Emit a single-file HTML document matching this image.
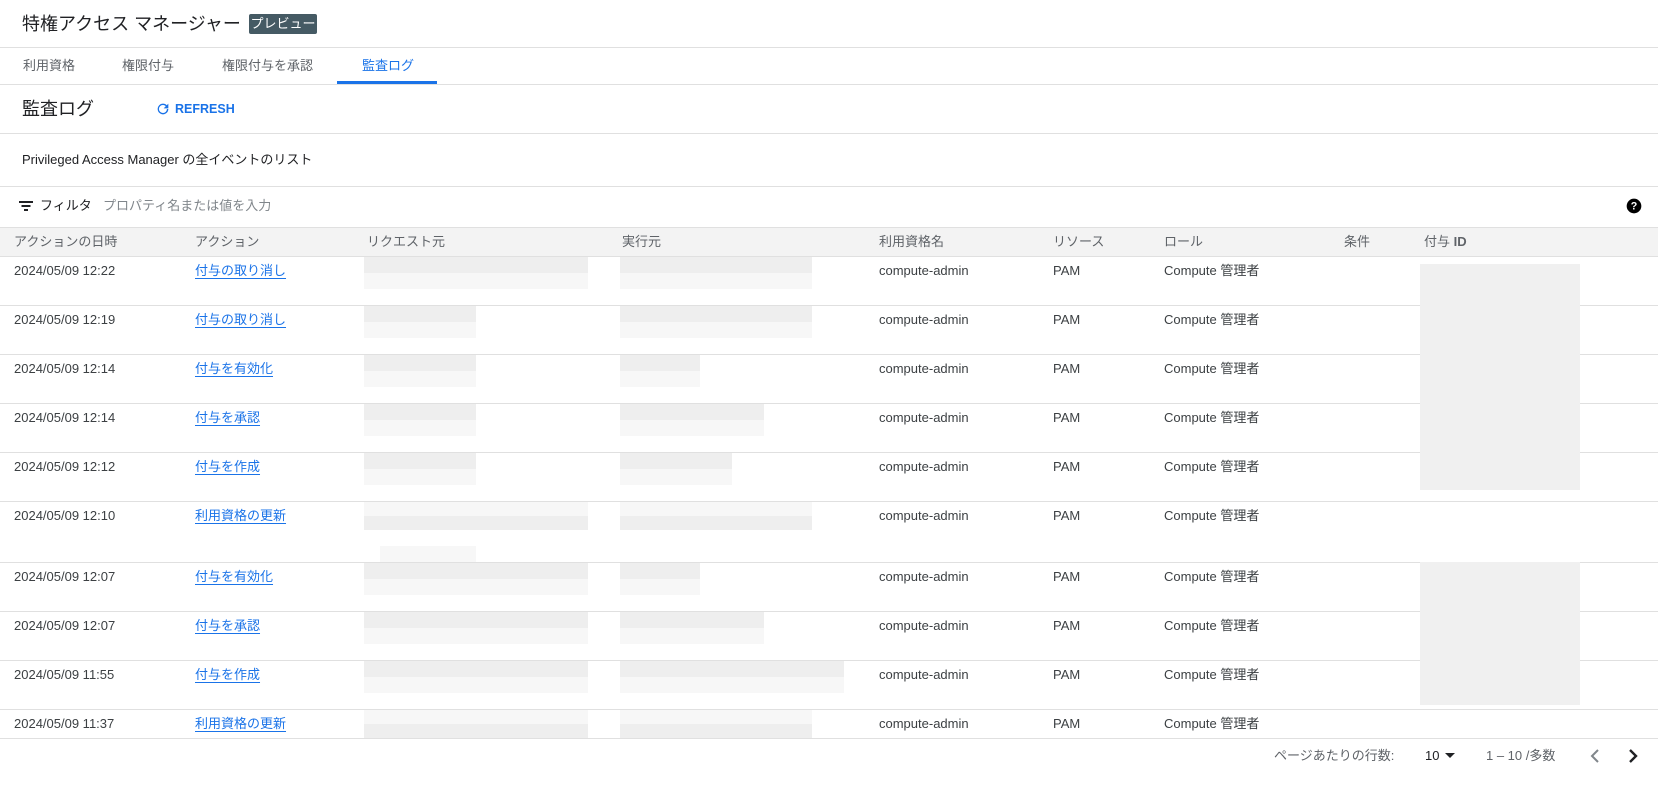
<!DOCTYPE html>
<html><head><meta charset="utf-8"><style>
*{margin:0;padding:0;box-sizing:border-box}
body{width:1658px;height:800px;position:relative;overflow:hidden;background:#fff;font-family:"Liberation Sans","Noto Sans CJK JP",sans-serif;color:#3c4043;font-size:13px}
.a{position:absolute;white-space:nowrap;line-height:17px}
.ln{position:absolute;left:0;width:1658px;height:1px;background:#e0e0e0}
.lk{color:#1a73e8;text-decoration:underline;text-underline-offset:3px}
.b{position:absolute;background:#eeeeee}
.c{position:absolute;background:#f7f7f7}
</style></head><body>
<div class="a" style="left:22px;top:12px;font-size:18px;line-height:24px;color:#202124">特権アクセス マネージャー</div>
<div class="a" style="left:249px;top:14px;height:20px;width:68px;background:#455a64;color:#fff;font-size:13px;line-height:20px;text-align:center;border-radius:2px">プレビュー</div>
<div class="ln" style="top:47px"></div>
<div class="a" style="left:23px;top:57px;color:#5f6368">利用資格</div>
<div class="a" style="left:122px;top:57px;color:#5f6368">権限付与</div>
<div class="a" style="left:222px;top:57px;color:#5f6368">権限付与を承認</div>
<div class="a" style="left:362px;top:57px;color:#1a73e8">監査ログ</div>
<div class="a" style="left:337px;top:81px;width:100px;height:3px;background:#1a73e8"></div>
<div class="ln" style="top:84px"></div>
<div class="a" style="left:22px;top:97px;font-size:18px;line-height:24px;color:#202124">監査ログ</div>
<svg class="a" style="left:155px;top:101px" width="16" height="16" viewBox="0 0 24 24"><path fill="#1a73e8" d="M17.65 6.35A7.96 7.96 0 0012 4a8 8 0 108 8h-2.1A6 6 0 1112 6c1.66 0 3.14.69 4.22 1.78L13 11h7V4l-2.35 2.35z"/></svg>
<div class="a" style="left:175px;top:101px;color:#1a73e8;font-weight:bold;font-size:12.5px">REFRESH</div>
<div class="ln" style="top:133px"></div>
<div class="a" style="left:22px;top:151px;color:#202124">Privileged Access Manager の全イベントのリスト</div>
<div class="ln" style="top:186px"></div>
<svg class="a" style="left:18px;top:199px" width="16" height="14" viewBox="0 0 16 14"><rect x="1" y="2" width="14" height="2" fill="#202124"/><rect x="3.5" y="6" width="9" height="2" fill="#202124"/><rect x="6" y="10" width="4" height="2" fill="#202124"/></svg>
<div class="a" style="left:40px;top:197px;color:#202124">フィルタ</div>
<div class="a" style="left:103px;top:197px;color:#80868b">プロパティ名または値を入力</div>
<svg class="a" style="left:1626px;top:198px" width="16" height="16" viewBox="0 0 24 24"><circle cx="12" cy="12" r="11" fill="#000"/><text x="12" y="17.5" text-anchor="middle" font-size="16" font-weight="bold" fill="#fff" font-family="Liberation Sans">?</text></svg>
<div class="ln" style="top:227px"></div>
<div class="a" style="left:0;top:228px;width:1658px;height:28px;background:#f3f3f3"></div>
<div class="ln" style="top:256px"></div>
<div class="a" style="top:233px;left:14px;color:#5f6368">アクションの日時</div>
<div class="a" style="top:233px;left:195px;color:#5f6368">アクション</div>
<div class="a" style="top:233px;left:367px;color:#5f6368">リクエスト元</div>
<div class="a" style="top:233px;left:622px;color:#5f6368">実行元</div>
<div class="a" style="top:233px;left:879px;color:#5f6368">利用資格名</div>
<div class="a" style="top:233px;left:1053px;color:#5f6368">リソース</div>
<div class="a" style="top:233px;left:1164px;color:#5f6368">ロール</div>
<div class="a" style="top:233px;left:1344px;color:#5f6368">条件</div>
<div class="a" style="top:233px;left:1424px;color:#5f6368">付与 <b>ID</b></div>

<div class="ln" style="top:305px"></div><div class="ln" style="top:354px"></div><div class="ln" style="top:403px"></div><div class="ln" style="top:452px"></div><div class="ln" style="top:501px"></div><div class="ln" style="top:562px"></div><div class="ln" style="top:611px"></div><div class="ln" style="top:660px"></div><div class="ln" style="top:709px"></div><div class="ln" style="top:738px"></div>

<div class="b" style="left:364px;top:257px;width:224px;height:16px"></div><div class="c" style="left:364px;top:273px;width:224px;height:16px"></div>
<div class="b" style="left:620px;top:257px;width:192px;height:16px"></div><div class="c" style="left:620px;top:273px;width:192px;height:16px"></div>
<div class="b" style="left:364px;top:306px;width:112px;height:16px"></div><div class="c" style="left:364px;top:322px;width:112px;height:16px"></div>
<div class="b" style="left:620px;top:306px;width:192px;height:16px"></div><div class="c" style="left:620px;top:322px;width:192px;height:16px"></div>
<div class="b" style="left:364px;top:355px;width:112px;height:16px"></div><div class="c" style="left:364px;top:371px;width:112px;height:16px"></div>
<div class="b" style="left:620px;top:355px;width:80px;height:16px"></div><div class="c" style="left:620px;top:371px;width:80px;height:16px"></div>
<div class="b" style="left:364px;top:404px;width:112px;height:16px"></div><div class="c" style="left:364px;top:420px;width:112px;height:16px"></div>
<div class="b" style="left:620px;top:404px;width:144px;height:16px"></div><div class="c" style="left:620px;top:420px;width:144px;height:16px"></div>
<div class="b" style="left:364px;top:453px;width:112px;height:16px"></div><div class="c" style="left:364px;top:469px;width:112px;height:16px"></div>
<div class="b" style="left:620px;top:453px;width:112px;height:16px"></div><div class="c" style="left:620px;top:469px;width:112px;height:16px"></div>
<div class="c" style="left:364px;top:502px;width:224px;height:14px"></div><div class="b" style="left:364px;top:516px;width:224px;height:14px"></div><div class="c" style="left:380px;top:546px;width:96px;height:16px"></div>
<div class="c" style="left:620px;top:502px;width:192px;height:14px"></div><div class="b" style="left:620px;top:516px;width:192px;height:14px"></div>
<div class="b" style="left:364px;top:563px;width:224px;height:16px"></div><div class="c" style="left:364px;top:579px;width:224px;height:16px"></div>
<div class="b" style="left:620px;top:563px;width:80px;height:16px"></div><div class="c" style="left:620px;top:579px;width:80px;height:16px"></div>
<div class="b" style="left:364px;top:612px;width:224px;height:16px"></div><div class="c" style="left:364px;top:628px;width:224px;height:16px"></div>
<div class="b" style="left:620px;top:612px;width:144px;height:16px"></div><div class="c" style="left:620px;top:628px;width:144px;height:16px"></div>
<div class="b" style="left:364px;top:661px;width:224px;height:16px"></div><div class="c" style="left:364px;top:677px;width:224px;height:16px"></div>
<div class="b" style="left:620px;top:661px;width:224px;height:16px"></div><div class="c" style="left:620px;top:677px;width:224px;height:16px"></div>
<div class="c" style="left:364px;top:710px;width:224px;height:14px"></div><div class="b" style="left:364px;top:724px;width:224px;height:14px"></div>
<div class="c" style="left:620px;top:710px;width:192px;height:14px"></div><div class="b" style="left:620px;top:724px;width:192px;height:14px"></div>
<div class="b" style="left:1420px;top:264px;width:160px;height:226px;background:#f0f0f0"></div>
<div class="b" style="left:1420px;top:562px;width:160px;height:143px;background:#f0f0f0"></div>

<div class="a" style="top:262px;left:14px">2024/05/09 12:22</div><div class="a lk" style="top:262px;left:195px">付与の取り消し</div>
<div class="a" style="top:311px;left:14px">2024/05/09 12:19</div><div class="a lk" style="top:311px;left:195px">付与の取り消し</div>
<div class="a" style="top:360px;left:14px">2024/05/09 12:14</div><div class="a lk" style="top:360px;left:195px">付与を有効化</div>
<div class="a" style="top:409px;left:14px">2024/05/09 12:14</div><div class="a lk" style="top:409px;left:195px">付与を承認</div>
<div class="a" style="top:458px;left:14px">2024/05/09 12:12</div><div class="a lk" style="top:458px;left:195px">付与を作成</div>
<div class="a" style="top:507px;left:14px">2024/05/09 12:10</div><div class="a lk" style="top:507px;left:195px">利用資格の更新</div>
<div class="a" style="top:568px;left:14px">2024/05/09 12:07</div><div class="a lk" style="top:568px;left:195px">付与を有効化</div>
<div class="a" style="top:617px;left:14px">2024/05/09 12:07</div><div class="a lk" style="top:617px;left:195px">付与を承認</div>
<div class="a" style="top:666px;left:14px">2024/05/09 11:55</div><div class="a lk" style="top:666px;left:195px">付与を作成</div>
<div class="a" style="top:715px;left:14px">2024/05/09 11:37</div><div class="a lk" style="top:715px;left:195px">利用資格の更新</div>

<div class="a" style="top:262px;left:879px">compute-admin</div><div class="a" style="top:262px;left:1053px">PAM</div><div class="a" style="top:262px;left:1164px">Compute 管理者</div>
<div class="a" style="top:311px;left:879px">compute-admin</div><div class="a" style="top:311px;left:1053px">PAM</div><div class="a" style="top:311px;left:1164px">Compute 管理者</div>
<div class="a" style="top:360px;left:879px">compute-admin</div><div class="a" style="top:360px;left:1053px">PAM</div><div class="a" style="top:360px;left:1164px">Compute 管理者</div>
<div class="a" style="top:409px;left:879px">compute-admin</div><div class="a" style="top:409px;left:1053px">PAM</div><div class="a" style="top:409px;left:1164px">Compute 管理者</div>
<div class="a" style="top:458px;left:879px">compute-admin</div><div class="a" style="top:458px;left:1053px">PAM</div><div class="a" style="top:458px;left:1164px">Compute 管理者</div>
<div class="a" style="top:507px;left:879px">compute-admin</div><div class="a" style="top:507px;left:1053px">PAM</div><div class="a" style="top:507px;left:1164px">Compute 管理者</div>
<div class="a" style="top:568px;left:879px">compute-admin</div><div class="a" style="top:568px;left:1053px">PAM</div><div class="a" style="top:568px;left:1164px">Compute 管理者</div>
<div class="a" style="top:617px;left:879px">compute-admin</div><div class="a" style="top:617px;left:1053px">PAM</div><div class="a" style="top:617px;left:1164px">Compute 管理者</div>
<div class="a" style="top:666px;left:879px">compute-admin</div><div class="a" style="top:666px;left:1053px">PAM</div><div class="a" style="top:666px;left:1164px">Compute 管理者</div>
<div class="a" style="top:715px;left:879px">compute-admin</div><div class="a" style="top:715px;left:1053px">PAM</div><div class="a" style="top:715px;left:1164px">Compute 管理者</div>

<div class="a" style="top:747px;left:1274px;color:#5f6368">ページあたりの行数:</div>
<div class="a" style="top:747px;left:1425px;color:#202124">10</div>
<svg class="a" style="left:1444px;top:752px" width="12" height="7" viewBox="0 0 12 7"><path d="M1 1h10L6 6z" fill="#202124"/></svg>
<div class="a" style="top:747px;left:1486px;color:#5f6368">1 – 10 /多数</div>
<svg class="a" style="left:1588px;top:747px" width="14" height="18" viewBox="0 0 14 18"><path d="M10 3L4 9l6 6" stroke="#80868b" stroke-width="2" fill="none"/></svg>
<svg class="a" style="left:1626px;top:747px" width="14" height="18" viewBox="0 0 14 18"><path d="M4 3l6 6-6 6" stroke="#202124" stroke-width="2.4" fill="none"/></svg>
</body></html>
